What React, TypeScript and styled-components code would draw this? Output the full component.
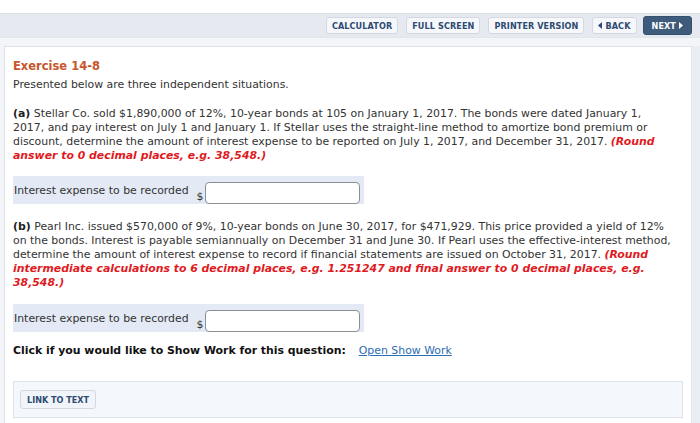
import React from "react";
import styled, { createGlobalStyle } from "styled-components";

const Global = createGlobalStyle`
  html, body { margin: 0; padding: 0; background: #ffffff; }
  body { font-family: Verdana, "DejaVu Sans", sans-serif; }
`;

const Page = styled.div`
  width: 700px;
  height: 423px;
  overflow: hidden;
  background: #ffffff;
  display: flex;
  flex-direction: column;
`;

const TopStub = styled.div`
  height: 13px;
  background: #ffffff;
`;

const Toolbar = styled.div`
  height: 25px;
  box-sizing: border-box;
  background: #e6eaf0;
  border-top: 1px solid #d9dee6;
  border-bottom: 1px solid #e1e6ed;
  display: flex;
  align-items: center;
  justify-content: flex-end;
  gap: 8px;
  padding-right: 8px;
`;

const ToolButton = styled.button<{ $primary?: boolean }>`
  height: ${(p) => (p.$primary ? 19 : 17)}px;
  box-sizing: border-box;
  padding: 0 ${(p) => (p.$primary ? 8 : 5)}px;
  margin-left: ${(p) => (p.$primary ? -2 : 0)}px;
  border-radius: 3px;
  border: 1px solid ${(p) => (p.$primary ? "#34506f" : "#d3d9e2")};
  background: ${(p) => (p.$primary ? "#3e5b7c" : "#f5f7fa")};
  color: ${(p) => (p.$primary ? "#ffffff" : "#2d4a72")};
  font-family: Verdana, "DejaVu Sans", sans-serif;
  font-weight: bold;
  font-size: 8.1px;
  letter-spacing: 0.1px;
  display: flex;
  align-items: center;
  gap: 3px;
  cursor: pointer;
`;

const Tri = styled.svg`
  width: 4px;
  height: 7px;
  fill: currentColor;
`;

const Frame = styled.div`
  flex: 1;
  display: flex;
  background: #f3f5f8;
  padding: 8px 0 0 4px;
  min-height: 0;
`;

const Content = styled.div`
  flex: 1;
  background: #ffffff;
  border: 1px solid #dde2e9;
  border-right: 1px solid #e3e7ee;
  border-bottom: none;
  padding: 12px 8px 0 8px;
  color: #333333;
`;

const RightRail = styled.div`
  width: 8px;
  background: #e9edf4;
`;

const Title = styled.div`
  color: #c8562b;
  font-weight: bold;
  font-size: 11.5px;
  line-height: 14px;
  margin-bottom: 5px;
`;

const Para = styled.p<{ $top?: number; $bottom?: number }>`
  margin: ${(p) => p.$top ?? 0}px 0 ${(p) => p.$bottom ?? 0}px 0;
  font-size: 10.9px;
  line-height: 14px;
  color: #333333;
  white-space: nowrap;
`;

const Strong = styled.b`
  color: #222222;
`;

const Note = styled.b`
  color: #e01a22;
  font-style: italic;
`;

const AnswerBand = styled.div`
  width: 351px;
  height: 28px;
  box-sizing: border-box;
  background: #e3eaf6;
  display: flex;
  align-items: flex-start;
  padding: 6px 0 0 1px;
`;

const AnswerLabel = styled.span`
  font-size: 10.9px;
  line-height: 14px;
  color: #333333;
  margin-top: 2px;
  margin-right: 8px;
`;

const Dollar = styled.span`
  font-size: 10.9px;
  line-height: 14px;
  color: #333333;
  margin-top: 8px;
  margin-right: 1px;
`;

const AmountInput = styled.input`
  width: 155px;
  height: 22px;
  box-sizing: border-box;
  border: 1px solid #8c8f94;
  border-radius: 4px;
  background: #ffffff;
  padding: 0 4px;
  font-family: inherit;
  font-size: 11px;
`;

const ShowWorkRow = styled.div`
  display: flex;
  align-items: baseline;
  gap: 13px;
  font-size: 10.9px;
  line-height: 14px;
  margin-top: 12px;
`;

const ShowWorkLabel = styled.b`
  color: #111111;
`;

const ShowWorkLink = styled.a`
  color: #2b6cb3;
  text-decoration: underline;
  cursor: pointer;
`;

const LinkBox = styled.div`
  margin-top: 23px;
  height: 37px;
  box-sizing: border-box;
  background: #f4f7fb;
  border: 1px solid #dee3ea;
  display: flex;
  align-items: center;
  padding-left: 6px;
`;

const LinkButton = styled.button`
  height: 19px;
  box-sizing: border-box;
  padding: 0 6px;
  border: 1px solid #d3d9e2;
  border-radius: 3px;
  background: #f1f4f8;
  color: #2d4a72;
  font-family: Verdana, "DejaVu Sans", sans-serif;
  font-weight: bold;
  font-size: 8.1px;
  cursor: pointer;
`;

export default function App() {
  return (
    <Page>
      <Global />
      <TopStub />
      <Toolbar>
        <ToolButton>CALCULATOR</ToolButton>
        <ToolButton>FULL SCREEN</ToolButton>
        <ToolButton>PRINTER VERSION</ToolButton>
        <ToolButton>
          <Tri viewBox="0 0 4 7"><polygon points="4,0 0,3.5 4,7" /></Tri>
          BACK
        </ToolButton>
        <ToolButton $primary>
          NEXT
          <Tri viewBox="0 0 4 7"><polygon points="0,0 4,3.5 0,7" /></Tri>
        </ToolButton>
      </Toolbar>
      <Frame>
        <Content>
          <Title>Exercise 14-8</Title>
          <Para $bottom={15}>Presented below are three independent situations.</Para>
          <Para $bottom={13}>
            <Strong>(a)</Strong> Stellar Co. sold $1,890,000 of 12%, 10-year bonds at 105 on January 1, 2017. The bonds were dated January 1,
            <br />
            2017, and pay interest on July 1 and January 1. If Stellar uses the straight-line method to amortize bond premium or
            <br />
            discount, determine the amount of interest expense to be reported on July 1, 2017, and December 31, 2017.{" "}
            <Note>
              (Round
              <br />
              answer to 0 decimal places, e.g. 38,548.)
            </Note>
          </Para>
          <AnswerBand>
            <AnswerLabel>Interest expense to be recorded</AnswerLabel>
            <Dollar>$</Dollar>
            <AmountInput />
          </AnswerBand>
          <Para $top={16} $bottom={14}>
            <Strong>(b)</Strong> Pearl Inc. issued $570,000 of 9%, 10-year bonds on June 30, 2017, for $471,929. This price provided a yield of 12%
            <br />
            on the bonds. Interest is payable semiannually on December 31 and June 30. If Pearl uses the effective-interest method,
            <br />
            determine the amount of interest expense to record if financial statements are issued on October 31, 2017.{" "}
            <Note>
              (Round
              <br />
              intermediate calculations to 6 decimal places, e.g. 1.251247 and final answer to 0 decimal places, e.g.
              <br />
              38,548.)
            </Note>
          </Para>
          <AnswerBand>
            <AnswerLabel>Interest expense to be recorded</AnswerLabel>
            <Dollar>$</Dollar>
            <AmountInput />
          </AnswerBand>
          <ShowWorkRow>
            <ShowWorkLabel>Click if you would like to Show Work for this question:</ShowWorkLabel>
            <ShowWorkLink>Open Show Work</ShowWorkLink>
          </ShowWorkRow>
          <LinkBox>
            <LinkButton>LINK TO TEXT</LinkButton>
          </LinkBox>
        </Content>
        <RightRail />
      </Frame>
    </Page>
  );
}
